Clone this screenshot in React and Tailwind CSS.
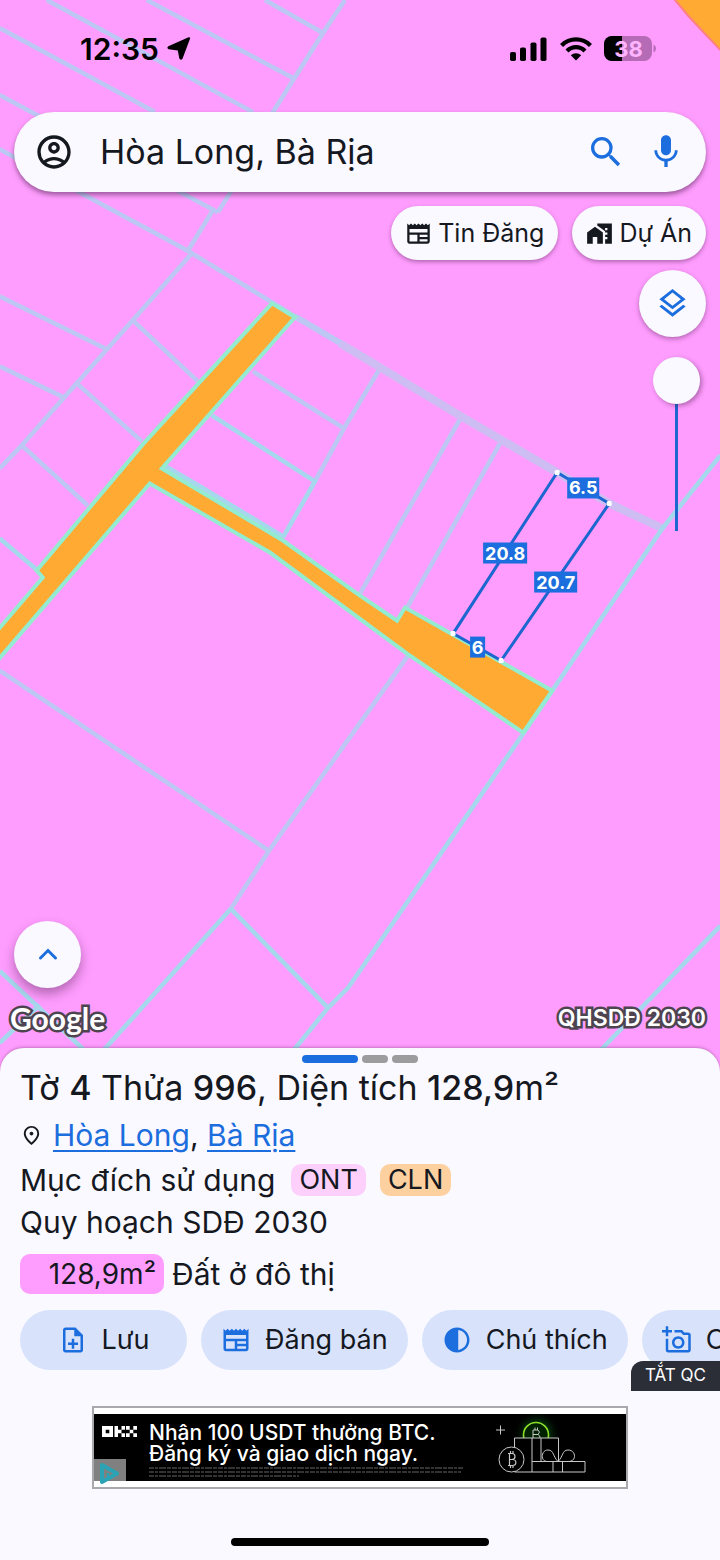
import React from "react";
import {
  MdContrast,
  MdHomeWork,
  MdMic,
  MdNewspaper,
  MdOutlineAccountCircle,
  MdOutlineAddAPhoto,
  MdOutlineLayers,
  MdOutlineNoteAdd,
  MdOutlinePlace,
  MdSearch,
} from "react-icons/md";

const softLines = [
  "M47 0L253 112",
  "M0 28L155 112",
  "M147 0L295 79",
  "M265 0L323 33",
  "M0 95L218 212",
  "M345 0L323 33L273 112L230 193L218 212",
  "M0 149L187 250L295 316",
  "M213 210L189 249",
  "M192 253L133 320L77 383L22 445L0 468",
  "M0 296L107 349",
  "M0 366L64 397",
  "M133 320L198 381",
  "M77 383L142 441",
  "M22 445L88 505",
  "M380 368L344 428L315 481",
  "M253 371L344 428",
  "M461 417L360 593",
  "M501 441L407 607",
  "M0 670L269 850",
  "M408 655L269 850L231 908",
];

const strongLines = [
  "M0 538L38 570",
  "M212 415L315 481L283 537",
  "M166 466L202 487L283 536",
  "M720 455L662 528L552 690L523 733L420 883L348 987L328 1007L285 1060",
  "M231 908L96 1058",
  "M231 908L328 1007",
  "M0 970L96 1060",
  "M0 1042L40 1004",
  "M720 925L590 1060",
];

const plotLabels = [
  { text: "6.5", x: 567, y: 477, w: 32 },
  { text: "20.8", x: 483, y: 542, w: 44 },
  { text: "20.7", x: 534, y: 571, w: 43 },
  { text: "6", x: 470, y: 636, w: 15 },
];

const plotCorners = [
  [557, 472],
  [609, 503],
  [501, 660],
  [453, 633],
];

const actions = [
  { label: "Lưu", icon: MdOutlineNoteAdd },
  { label: "Đăng bán", icon: MdNewspaper },
  { label: "Chú thích", icon: MdContrast },
  { label: "Chụp ảnh", icon: MdOutlineAddAPhoto },
];

const PlanningMap = () => (
  <svg
    className="absolute inset-0 h-full w-full"
    viewBox="0 0 720 1071"
    preserveAspectRatio="xMidYMin slice"
    role="img"
    aria-label="QHSDĐ 2030"
  >
    <rect width="720" height="1071" fill="#ff9dff" />
    <path
      d="M673 -2L688 16L702 31L722 52V-2Z"
      fill="#ffaa33"
      stroke="#ff7f86"
      strokeWidth="2"
    />
    <g fill="none" stroke="#bcc7f3" strokeWidth="4.5">
      {softLines.map((d) => (
        <path key={d} d={d} />
      ))}
    </g>
    <path
      d="M295 316L380 366"
      fill="none"
      stroke="#bcc7f3"
      strokeWidth="6"
    />
    <path
      d="M340 343L380 367L461 416L557 472L609 503L662 528"
      fill="none"
      stroke="#cdbdf2"
      strokeWidth="8"
    />
    <g fill="none" stroke="#a5d8ec" strokeWidth="4.5">
      {strongLines.map((d) => (
        <path key={d} d={d} />
      ))}
    </g>
    {/* đường giao thông */}
    <path
      d="M272 303L295 317L162 468L283 540L360 595L397 620L405 607L552 690L523 732L407 653L270 552L150 483L-4 662V632L43 577L37 570L143 444Z"
      fill="#ffaa33"
      stroke="#94ecd0"
      strokeWidth="4"
    />
    {/* thửa đất đang chọn */}
    <path
      d="M557 472L609 503L501 660L453 633Z"
      fill="none"
      stroke="#1b66cf"
      strokeWidth="3"
    />
    {plotCorners.map(([x, y]) => (
      <rect
        key={x}
        x={x - 2.5}
        y={y - 2.5}
        width="5"
        height="5"
        rx="1.5"
        fill="#fff"
      />
    ))}
    {plotLabels.map((label) => (
      <g key={label.text}>
        <rect x={label.x} y={label.y} width={label.w} height="21" fill="#1c6ddd" />
        <text
          x={label.x + label.w / 2}
          y={label.y + 17}
          textAnchor="middle"
          fontSize="18"
          fontWeight="700"
          fill="#fff"
        >
          {label.text}
        </text>
      </g>
    ))}
  </svg>
);

const StatusBar = () => (
  <div className="flex h-[98px] items-center justify-between pr-16 pl-20 text-black">
    <div className="flex items-center gap-2">
      <span className="text-[30px] leading-9 font-semibold">12:35</span>
      <svg className="h-6 w-6" viewBox="0 0 24 24" fill="currentColor">
        <path d="M21.600 .300Q23.600 0 23 1.800L15.600 21.400Q13.900 23.800 12.300 21.600L10.800 13.400L1.700 12.300Q-.700 11 1.300 9.300Z" />
      </svg>
    </div>
    <div className="flex items-center gap-3">
      <svg className="h-6 w-[38px]" viewBox="0 0 38 24" fill="currentColor">
        <rect x="0" y="15" width="6" height="9" rx="1.8" />
        <rect x="10" y="10.5" width="6" height="13.5" rx="1.8" />
        <rect x="20.5" y="5.5" width="6" height="18.5" rx="1.8" />
        <rect x="30.5" y="0.5" width="6" height="23.5" rx="1.8" />
      </svg>
      <svg className="h-6 w-8" viewBox="0 0 32 24" fill="none">
        <path
          d="M1.500 8.500C9.500 .300 22.500 .300 30.500 8.500"
          stroke="currentColor"
          strokeWidth="4.400"
        />
        <path
          d="M7 14C12 8.800 20 8.800 25 14"
          stroke="currentColor"
          strokeWidth="4.200"
        />
        <path
          d="M16 23.500L10.800 18.200C13.600 15.500 18.400 15.500 21.200 18.200Z"
          fill="currentColor"
        />
      </svg>
      <svg className="h-[26px] w-[52px]" viewBox="0 0 52 26">
        <defs>
          <clipPath id="battery">
            <rect width="48" height="25" rx="8" />
          </clipPath>
        </defs>
        <g clipPath="url(#battery)">
          <rect width="48" height="25" fill="#b56bb5" />
          <rect width="18" height="25" fill="#000" />
        </g>
        <path d="M49.500 8.500Q52 10 52 12.500T49.500 16.500Z" fill="#b56bb5" />
        <text
          x="24.500"
          y="20.500"
          textAnchor="middle"
          fontSize="22"
          fontWeight="700"
          fill="#ffb4ff"
        >
          38
        </text>
      </svg>
    </div>
  </div>
);

const SearchBar = () => (
  <form
    className="mx-3.5 mt-3.5 flex h-20 items-center rounded-full bg-[#faf9ff] pr-5 pl-5 shadow-[0_3px_5px_rgba(60,20,60,0.5)]"
    onSubmit={(e) => e.preventDefault()}
  >
    <button type="button" aria-label="Tài khoản">
      <MdOutlineAccountCircle size={40} />
    </button>
    <input
      type="text"
      aria-label="Tìm kiếm"
      defaultValue="Hòa Long, Bà Rịa"
      className="ml-[26px] min-w-0 flex-1 bg-transparent text-[34px] leading-10 outline-none"
    />
    <button type="submit" aria-label="Tìm" className="text-[#1c6ddd]">
      <MdSearch size={40} />
    </button>
    <button
      type="button"
      aria-label="Tìm bằng giọng nói"
      className="ml-5 text-[#1c6ddd]"
    >
      <MdMic size={40} />
    </button>
  </form>
);

const MapControls = () => (
  <div className="mt-3.5 flex flex-col items-end px-3.5">
    <div className="flex gap-3.5">
      <button className="flex h-[54px] items-center gap-1.5 rounded-full bg-[#faf9ff] px-3.5 text-[25px] leading-8 shadow-[0_2px_4px_rgba(60,20,60,0.4)]">
        <MdNewspaper size={27} />
        Tin Đăng
      </button>
      <button className="flex h-[54px] items-center gap-1.5 rounded-full bg-[#faf9ff] px-3.5 text-[25px] leading-8 shadow-[0_2px_4px_rgba(60,20,60,0.4)]">
        <MdHomeWork size={27} />
        Dự Án
      </button>
    </div>
    <button
      aria-label="Lớp bản đồ"
      className="mt-2.5 flex h-[67px] w-[67px] items-center justify-center rounded-full bg-[#faf9ff] text-[#1c6ddd] shadow-[0_2px_5px_rgba(60,20,60,0.4)]"
    >
      <MdOutlineLayers size={35} />
    </button>
    <input
      type="range"
      aria-label="Độ mờ"
      defaultValue="100"
      className="mt-5 mr-1.5 h-[174px] w-[47px] appearance-none bg-[linear-gradient(#1c66d0,#1c66d0)] bg-[length:3px_100%] bg-center bg-no-repeat [direction:rtl] [writing-mode:vertical-lr] [&::-webkit-slider-thumb]:h-[47px] [&::-webkit-slider-thumb]:w-[47px] [&::-webkit-slider-thumb]:appearance-none [&::-webkit-slider-thumb]:rounded-full [&::-webkit-slider-thumb]:bg-[#faf9ff] [&::-webkit-slider-thumb]:shadow-[2px_2px_5px_rgba(60,20,60,0.4)]"
    />
  </div>
);

const MapFooter = () => (
  <div className="mt-auto px-3.5 pb-9">
    <button
      aria-label="Mở rộng"
      className="flex h-[67px] w-[67px] items-center justify-center rounded-full bg-[#faf9ff] text-[#1c6ddd] shadow-[0_6px_12px_rgba(60,20,60,0.4)]"
    >
      <svg className="h-5 w-5" viewBox="0 0 20 20" fill="none">
        <path
          d="M2.500 13L10 5.500L17.500 13"
          stroke="currentColor"
          strokeWidth="3"
          strokeLinecap="round"
        />
      </svg>
    </button>
    <div className="mt-3 -ml-1 flex items-center justify-between text-white [-webkit-text-stroke:5px_#4d4450] [paint-order:stroke_fill]">
      <span className="font-[Lato,sans-serif] text-[30px] leading-9 font-bold">
        Google
      </span>
      <span className="text-[23px] leading-9 font-semibold">QHSDĐ 2030</span>
    </div>
  </div>
);

const ParcelInfo = () => (
  <div className="px-5">
    <h1 className="text-[34px] leading-[50px]">
      Tờ <b className="font-medium">4</b> Thửa{" "}
      <b className="font-medium">996</b>, Diện tích{" "}
      <b className="font-medium">128,9</b>m²
    </h1>
    <div className="flex h-[45px] items-center text-[30px]">
      <MdOutlinePlace size={23} />
      <p className="ml-2.5">
        <a
          href="#hoa-long"
          className="text-[#1c6ddd] underline decoration-2 underline-offset-4"
        >
          Hòa Long
        </a>
        ,{" "}
        <a
          href="#ba-ria"
          className="text-[#1c6ddd] underline decoration-2 underline-offset-4"
        >
          Bà Rịa
        </a>
      </p>
    </div>
    <div className="flex h-11 items-center text-[30px]">
      <span>Mục đích sử dụng</span>
      <span className="ml-4 rounded-[10px] bg-[#fcd0fb] px-2 text-[27px] leading-8">
        ONT
      </span>
      <span className="ml-3.5 rounded-[10px] bg-[#fdd09f] px-2 text-[27px] leading-8">
        CLN
      </span>
    </div>
    <p className="text-[30px] leading-10">Quy hoạch SDĐ 2030</p>
    <div className="mt-3 flex h-10 items-center gap-2 text-[30px]">
      <span className="w-36 rounded-[10px] bg-[#ff9dff] pr-2 text-right text-[28px] leading-10">
        128,9m²
      </span>
      <span>Đất ở đô thị</span>
    </div>
  </div>
);

const GiftArt = () => (
  <svg
    className="h-[66px] w-[130px]"
    viewBox="0 0 130 66"
    fill="none"
    stroke="#c8c8c8"
    strokeWidth="1"
  >
    <defs>
      <radialGradient id="glow">
        <stop offset="0.3" stopColor="#0c5a14" />
        <stop offset="1" stopColor="#000" stopOpacity="0" />
      </radialGradient>
      <clipPath id="coin-top">
        <rect x="20" y="0" width="50" height="24" />
      </clipPath>
    </defs>
    <circle cx="41" cy="20" r="24" fill="url(#glow)" stroke="none" />
    <path d="M19.500 24H63.500V58H19.500Z" fill="#000" stroke="none" />
    <path d="M0 16H9M4.500 11.500V20.500" />
    <g clipPath="url(#coin-top)">
      <circle cx="40" cy="21" r="12.500" fill="#020" stroke="#8be02a" strokeWidth="1.600" />
      <path d="M37 25V16H42Q45 18 42 20.500H37M42 20.500Q46 23 42 26M39 16V13.500M41.500 16V13.500" />
    </g>
    <circle cx="15.500" cy="45.500" r="12.500" />
    <path
      d="M12 51.500H16.500C21 51.500 21 45.500 16.500 45.500H13.500M12 39.500H16C20 39.500 20 45.500 16 45.500M13.500 39.500V51.500M14.500 39.500V37M17 39.500V37M14.500 51.500V54M17 51.500V54"
      strokeWidth="1.200"
    />
    <path d="M18.500 33V24H62.500V47M36 24V58M45 24V47M18.500 58H89V47.500H36M57 47.500V58M66.500 47.500V58" />
    <path d="M62 47.500C57 43 58 36 52 36C45 36 44 47 51 47.500M62 47.500C67 43 66 36 72 36C80 36 81 47 73 47.500" />
  </svg>
);

const AdBanner = () => (
  <div className="relative px-5 pt-[15px] pb-[49px]">
    <button className="absolute right-0 bottom-full h-[30px] rounded-tl-xl bg-[#2b2e37] pr-3.5 pl-3.5 text-[17px] text-white">
      TẮT QC
    </button>
    <a
      href="#okx"
      className="relative mx-auto block max-w-[536px] border-2 border-[#a9a9ad] bg-white py-1.5"
    >
      <div className="flex h-[67px] items-start overflow-hidden bg-black text-white">
        <svg
          className="mt-3 ml-2 h-[11px] w-[35px] shrink-0"
          viewBox="0 0 35 11"
          fill="currentColor"
          role="img"
          aria-label="OKX"
        >
          <path
            fillRule="evenodd"
            d="M0 0H11V11H0ZM3.700 3.700V7.300H7.300V3.700Z"
          />
          <path d="M12.500 0H16V3.700H19.500V0H23V3.700H19.500V7.300H23V11H19.500V7.300H16V11H12.500Z" />
          <path d="M24 0H27.700V3.700H31.300V7.300H27.700V11H24V7.300H27.700V3.700H24ZM31.300 0H35V3.700H31.300ZM31.300 7.300H35V11H31.300Z" />
        </svg>
        <div className="mt-2 ml-3 min-w-0 flex-1 whitespace-nowrap">
          <p className="text-[21px] leading-[21px] font-medium">
            Nhận 100 USDT thưởng BTC.
          </p>
          <p className="text-[21px] leading-[21px] font-medium">
            Đăng ký và giao dịch ngay.
          </p>
          <svg
            className="mt-0.5 h-3 w-[316px]"
            viewBox="0 0 316 12"
            stroke="#444"
            strokeWidth="1.500"
            strokeDasharray="5 1 3 1 7 1 4 1"
          >
            <path d="M0 2H314M0 6H312M0 10H150" />
          </svg>
        </div>
        <GiftArt />
      </div>
      <span className="absolute bottom-0 left-0 flex h-7 w-8 items-center justify-center bg-white/50">
        <svg className="h-6 w-6" viewBox="0 0 24 24" fill="none">
          <path
            d="M4 21V4L19 12.500Z"
            stroke="#2ba3b4"
            strokeWidth="4"
            strokeLinejoin="round"
          />
          <path d="M10 9V9.500M10 12V17" stroke="#2ba3b4" strokeWidth="2.500" />
        </svg>
      </span>
    </a>
  </div>
);

export default function App() {
  return (
    <div className="flex min-h-screen flex-col overflow-hidden bg-[#ff9dff] font-[Inter,sans-serif] text-[#15181f]">
      <main className="relative flex flex-1 flex-col">
        <PlanningMap />
        <div className="relative flex flex-1 flex-col">
          <StatusBar />
          <SearchBar />
          <MapControls />
          <MapFooter />
        </div>
      </main>

      <section className="relative -mt-6 rounded-t-3xl bg-[#faf9ff] pt-[7px] shadow-[0_-1px_3px_rgba(60,20,60,0.3)]">
        <div className="flex justify-center gap-1">
          <span className="h-2 w-14 rounded-full bg-[#1c6ddd]" />
          <span className="h-2 w-[26px] rounded-full bg-[#9c9c9f]" />
          <span className="h-2 w-[26px] rounded-full bg-[#9c9c9f]" />
        </div>
        <ParcelInfo />
        <div className="mt-4 mb-[21px] flex gap-3.5 overflow-hidden pl-5">
          {actions.map(({ label, icon: Icon }) => (
            <button
              key={label}
              className="flex h-[60px] min-w-[167px] shrink-0 items-center justify-center gap-3.5 rounded-full bg-[#d8e3fb] px-5 text-[27px] whitespace-nowrap"
            >
              <Icon size={30} className="text-[#1c6ddd]" />
              {label}
            </button>
          ))}
        </div>
        <AdBanner />
        <div className="mx-auto mb-3.5 h-2 w-[258px] rounded-full bg-black" />
      </section>
    </div>
  );
}
